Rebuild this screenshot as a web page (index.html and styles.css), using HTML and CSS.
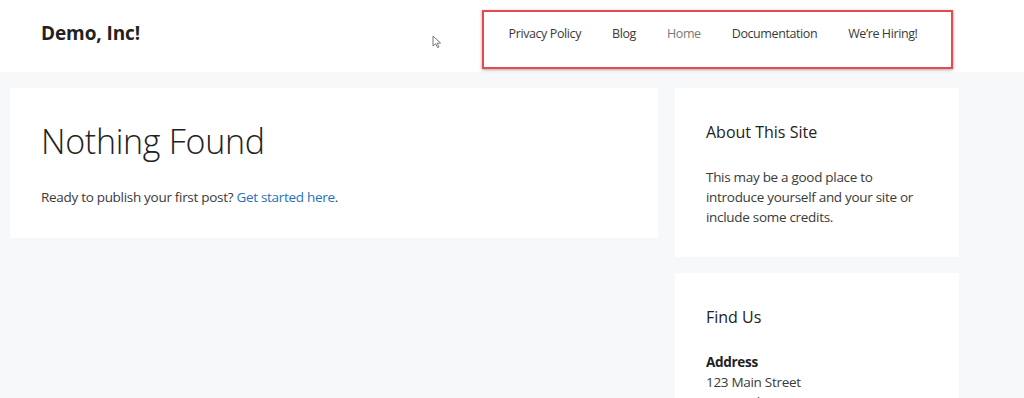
FILE: index.html
```html
<!DOCTYPE html>
<html lang="en">
<head>
  <meta charset="UTF-8" />
  <title>Demo, Inc!</title>
  <link rel="stylesheet" href="styles.css">
</head>
<body>

  <header class="site-header">
    <div class="brand">Demo, Inc!</div>
    <nav class="main-nav">
      <a href="#">Privacy Policy</a>
      <a href="#">Blog</a>
      <a href="#" class="current">Home</a>
      <a href="#">Documentation</a>
      <a href="#">We’re Hiring!</a>
    </nav>
    <div class="highlight"></div>
    <svg class="cursor" width="12" height="14" viewBox="0 0 12 14">
      <path d="M1 1 L1 11 L3.5 8.7 L5.6 12.6 L7 11.9 L5.1 8.2 L8.6 8.1 Z" fill="#fff" stroke="#777" stroke-width="1"/>
    </svg>
  </header>

  <div class="page">
    <main class="content">
      <h1>Nothing Found</h1>
      <p>Ready to publish your first post? <a href="#">Get started here</a>.</p>
    </main>

    <aside class="sidebar">
      <section class="widget">
        <h2>About This Site</h2>
        <p>This may be a good place to introduce yourself and your site or include some credits.</p>
      </section>
      <section class="widget">
        <h2>Find Us</h2>
        <p><strong>Address</strong><br>123 Main Street<br>New York, NY 10001</p>
      </section>
    </aside>
  </div>

</body>
</html>
```

FILE: styles.css
```css
* {
  box-sizing: border-box;
  margin: 0;
  padding: 0;
}

body {
  font-family: 'Open Sans', 'Noto Sans', sans-serif;
  background: #f7f8f9;
  color: #222;
  font-size: 13.5px;
  line-height: 20px;
  letter-spacing: -0.3px;
  height: 398px;
  overflow: hidden;
}

a {
  text-decoration: none;
}

.site-header {
  position: relative;
  height: 72px;
  background: #fff;
  display: flex;
  align-items: flex-start;
  padding-left: 41px;
}

.brand {
  font-size: 19px;
  font-weight: 700;
  color: #222;
  margin-top: 19px;
  line-height: 28px;
  letter-spacing: -0.1px;
}

.main-nav {
  display: flex;
  margin-left: 353px;
  margin-top: 24px;
}

.main-nav a {
  font-size: 12.5px;
  letter-spacing: -0.4px;
  color: #3a3a3a;
  padding: 0 15.5px;
  line-height: 20px;
}

.main-nav a.current {
  color: #787878;
}

/* annotation box round the menu */
.highlight {
  position: absolute;
  left: 482px;
  top: 10px;
  width: 471px;
  height: 59px;
  border: 2px solid #ea4750;
  box-shadow: 0 1px 3px rgba(0,0,0,0.35);
}

.cursor {
  position: absolute;
  left: 432px;
  top: 35px;
}

.page {
  display: flex;
  gap: 17px;
  padding: 16px 0 0 10px;
  align-items: flex-start;
}

.content {
  width: 648px;
  background: #fff;
  padding: 31px 31px 31px;
}

.content h1 {
  font-size: 34px;
  font-weight: 300;
  line-height: 44px;
  color: #222;
  letter-spacing: -0.3px;
  margin-bottom: 24px;
}

.content p {
  color: #3a3a3a;
}

.content p a {
  color: #1e73be;
}

.sidebar {
  width: 284px;
  display: flex;
  flex-direction: column;
  gap: 16px;
}

.widget {
  background: #fff;
  padding: 32px 31px 30px;
}

.widget h2 {
  font-size: 16px;
  font-weight: 400;
  line-height: 24px;
  color: #222;
  letter-spacing: 0;
  margin-bottom: 23px;
}

.widget p {
  color: #3a3a3a;
}

.widget strong {
  color: #222;
}
```
